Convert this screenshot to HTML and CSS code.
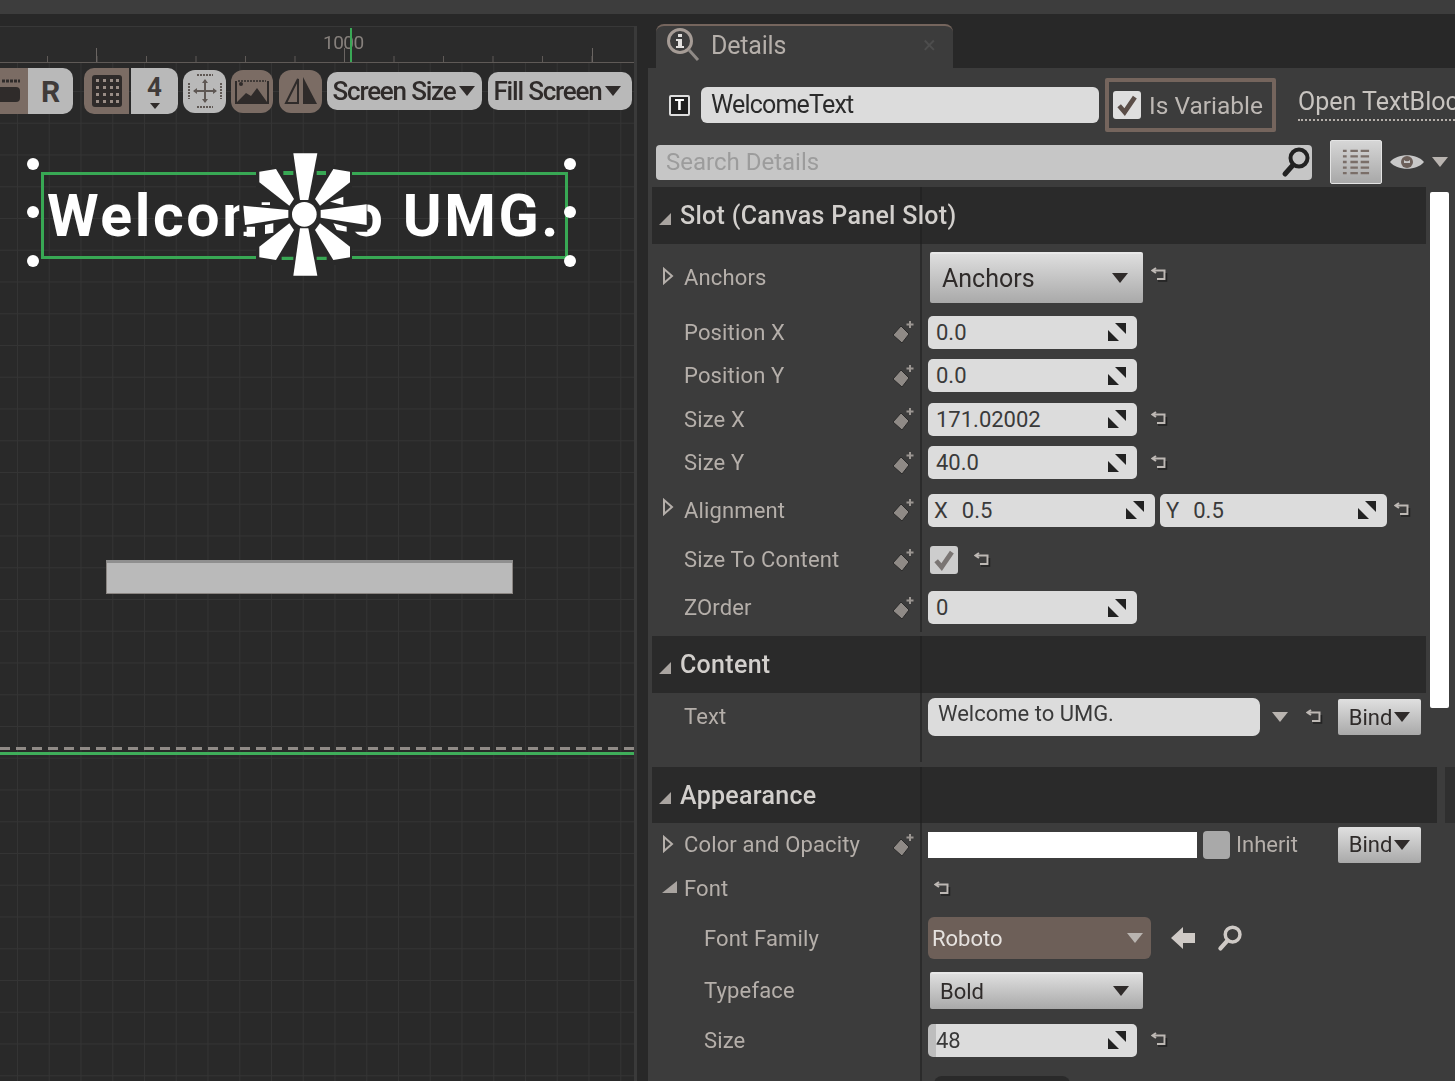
FILE: index.html
```html
<!DOCTYPE html>
<html>

<head>
  <title>UMG Designer - Details</title>
  <link rel="stylesheet" href="styles.css">
</head>

<body>
  <svg class="sprites" width="0" height="0">
    <symbol id="key" viewBox="0 0 24 24">
      <path d="M10 6l8 8-7 9-9-8z" fill="#8f8a86" stroke="#2a2a2a" stroke-width="1" />
      <path d="M19 1v7M15.500 4.500h7" stroke="#9b9692" stroke-width="2" />
    </symbol>
    <symbol id="reset" viewBox="0 0 18 18">
      <path d="M5 2L1.500 4.500 5 7" fill="none" stroke="#bdb8b4" stroke-width="2" />
      <path d="M2 4.500h11.500v8.500H6" fill="none" stroke="#bdb8b4" stroke-width="2" />
      <path d="M15.500 7v8H7" fill="none" stroke="#222" stroke-width="1.500" />
    </symbol>
    <symbol id="spin" viewBox="0 0 18 18">
      <path d="M7 0h11v11z" fill="#222" />
      <path d="M0 7l11 11H0z" fill="#222" />
    </symbol>
    <symbol id="lens" viewBox="0 0 30 32">
      <circle cx="18" cy="12" r="8.500" fill="none" stroke="currentColor" stroke-width="4" />
      <path d="M12 19L4 28" stroke="currentColor" stroke-width="5" stroke-linecap="round" />
    </symbol>
    <symbol id="tick" viewBox="0 0 28 28">
      <path d="M4 15l7 8L24 4" fill="none" stroke="currentColor" stroke-width="6" />
    </symbol>
    <symbol id="closed" viewBox="0 0 12 18">
      <path d="M2 2l8 7-8 7z" fill="none" stroke="#b5afaa" stroke-width="2" />
    </symbol>
  </svg>

  <div class="app">
    <div class="top-strip"></div>

    <div class="workspace">
      <section class="designer">
        <div class="viewport">
          <div class="ruler">
            <span class="ruler-num">1000</span>
            <i class="ruler-mark"></i>
          </div>

          <div class="stage">
            <div class="toolbar">
              <div class="tb-group">
                <div class="tb-btn tb-brown tb-clip">
                  <svg width="22" height="30" viewBox="0 0 22 30">
                    <path d="M2 5h18" stroke="#2f2b2a" stroke-width="3" stroke-dasharray="3 1" />
                    <rect x="-4" y="11" width="24" height="15" rx="4" fill="#2f2b2a" />
                  </svg>
                </div>
                <div class="tb-btn tb-light tb-end">R</div>
              </div>

              <div class="tb-group tb-gap">
                <div class="tb-btn tb-brown tb-start">
                  <svg width="30" height="32" viewBox="0 0 30 32">
                    <rect width="30" height="32" rx="3" fill="#2f2b2a" />
                    <path d="M4 4h3v3H4zm7 0h3v3h-3zm7 0h3v3h-3zm6 0h3v3h-3zM4 11h3v3H4zm7 0h3v3h-3zm7 0h3v3h-3zm6 0h3v3h-3zM4 18h3v3H4zm7 0h3v3h-3zm7 0h3v3h-3zm6 0h3v3h-3zM4 25h3v3H4zm7 0h3v3h-3zm7 0h3v3h-3zm6 0h3v3h-3z" fill="#9a8d86" />
                  </svg>
                </div>
                <div class="tb-btn tb-light tb-end tb-num">4<i class="caret caret-small"></i></div>
              </div>

              <div class="tb-btn tb-light tb-round tb-fit">
                <svg width="36" height="36" viewBox="0 0 36 36">
                  <path d="M10 2h16M10 34h16M2 10v16M34 10v16" stroke="#5f5854" stroke-width="2" stroke-dasharray="2 1" />
                  <path d="M18 7v22M7 18h22" stroke="#5f5854" stroke-width="2" />
                  <path d="M18 6l-3 4h6zM18 30l-3-4h6zM6 18l4-3v6zM30 18l-4-3v6z" fill="#5f5854" />
                </svg>
              </div>
              <div class="tb-btn tb-brown tb-round tb-pic">
                <svg width="34" height="26" viewBox="0 0 34 26">
                  <path d="M1 3v22h32V3" fill="none" stroke="#2f2b2a" stroke-width="2" />
                  <path d="M3 3h28" stroke="#2f2b2a" stroke-width="1.500" stroke-dasharray="2 1" />
                  <circle cx="6" cy="6" r="2" fill="#2f2b2a" />
                  <path d="M2 24l9-9 5 3 6-8 10 14z" fill="#2f2b2a" />
                </svg>
              </div>
              <div class="tb-btn tb-brown tb-round tb-mirror">
                <svg width="34" height="30" viewBox="0 0 34 30">
                  <path d="M14 3L2 27h12z" fill="none" stroke="#2f2b2a" stroke-width="2" />
                  <path d="M19 1l14 27H19z" fill="#2f2b2a" />
                </svg>
              </div>
              <div class="tb-btn tb-light tb-text tb-screen">Screen Size<i class="caret"></i></div>
              <div class="tb-btn tb-light tb-text tb-fill">Fill Screen<i class="caret"></i></div>
            </div>

            <!-- widgets sit on the free design canvas -->
            <div class="widget-text">Welcome to UMG.</div>
            <i class="handle h-tl"></i><i class="handle h-tr"></i>
            <i class="handle h-ml"></i><i class="handle h-mr"></i>
            <i class="handle h-bl"></i><i class="handle h-br"></i>

            <svg class="spinner" width="150" height="140" viewBox="0 0 450 420">
              <path d="M78 60H366V165H412V260H366V360H78V260H28V165H78z" fill="#292929" />
              <path d="M160 78h30v12h-30zM260 78h28v12h-28zM155 335h35v10h-35zM260 335h30v10h-30z" fill="#38a854" />
              <path d="M50 245h25v30H50zM105 240l25-5v28l-25 4zM310 235l40 10v15l-30-5zM300 170l40-15v25zM95 172h25v8H95z" fill="#fff" />
              <g fill="#fff">
                <circle cx="223" cy="208" r="37" />
                <path d="M190 25h72l-27 140h-25z" />
                <path d="M190 392h72l-27-142h-25z" />
                <path d="M40 182l135 13v23L45 240z" />
                <path d="M410 178v62l-138-22v-23z" />
                <path d="M88 80l50-8 54 90-14 20-90-70z" />
                <path d="M360 80l-50-8-55 90 15 20 90-70z" />
                <path d="M88 337l50 8 54-90-14-20-90 70z" />
                <path d="M360 337l-50 8-55-90 15-20 90 70z" />
              </g>
            </svg>

            <div class="widget-bar"></div>
            <div class="safe-line"></div>
          </div>
        </div>
      </section>

      <section class="details">
        <div class="tab-strip">
          <div class="tab">
            <svg width="34" height="36" viewBox="0 0 34 36">
              <circle cx="14" cy="14" r="11.500" fill="#3c3c3c" stroke="#a69c96" stroke-width="3" />
              <path d="M23 23l9 10" stroke="#8f8a86" stroke-width="3" />
              <path d="M12 7h4v3h-4zM10 12h6v7h2v2h-8v-2h2v-5h-2z" fill="#e2e0de" />
            </svg>
            <span class="tab-title">Details</span>
            <span class="tab-close">×</span>
          </div>
        </div>

        <div class="panel">
          <div class="name-row">
            <div class="type-icon">T</div>
            <div class="name-input">WelcomeText</div>
            <div class="var-box">
              <div class="check check-on"><svg width="22" height="22"><use href="#tick" /></svg></div>
              <span>Is Variable</span>
            </div>
            <div class="open-link">Open TextBlock</div>
          </div>

          <div class="search-row">
            <div class="search-box">
              <span>Search Details</span>
              <svg class="search-lens" width="30" height="32"><use href="#lens" /></svg>
            </div>
            <div class="view-btn">
              <svg width="28" height="30" viewBox="0 0 30 32">
                <path d="M1 4h4M9 4h8M20 4h9M1 10h4M9 10h8M20 10h9M1 16h4M9 16h8M20 16h9M1 22h4M9 22h8M20 22h9M1 28h4M9 28h8M20 28h9" stroke="#7a6e68" stroke-width="2.500" />
              </svg>
            </div>
            <svg class="eye" width="36" height="22" viewBox="0 0 36 22">
              <path d="M1 11C8 2 28 2 35 11 28 20 8 20 1 11z" fill="#c8c8c8" />
              <circle cx="18" cy="11" r="6" fill="#6c5f59" />
              <path d="M15 9a4 4 0 0 0 6 0v3h-6z" fill="#c8c8c8" />
            </svg>
            <i class="caret caret-pale"></i>
          </div>

          <div class="sections">
            <div class="section-head">
              <div class="head-label"><i class="tri-open"></i>Slot (Canvas Panel Slot)</div>
            </div>

            <div class="row row-anchors">
              <div class="label"><svg class="tri-closed"><use href="#closed" /></svg><span>Anchors</span></div>
              <div class="value">
                <div class="combo combo-anchors">Anchors<i class="caret"></i></div>
                <svg class="reset reset-anchors"><use href="#reset" /></svg>
              </div>
            </div>
            <div class="row row-44">
              <div class="label"><span class="ind">Position X</span><svg class="key"><use href="#key" /></svg></div>
              <div class="value">
                <div class="field">0.0<svg class="spin"><use href="#spin" /></svg></div>
              </div>
            </div>
            <div class="row row-43">
              <div class="label"><span class="ind">Position Y</span><svg class="key"><use href="#key" /></svg></div>
              <div class="value">
                <div class="field">0.0<svg class="spin"><use href="#spin" /></svg></div>
              </div>
            </div>
            <div class="row row-44">
              <div class="label"><span class="ind">Size X</span><svg class="key"><use href="#key" /></svg></div>
              <div class="value">
                <div class="field">171.02002<svg class="spin"><use href="#spin" /></svg></div>
                <svg class="reset"><use href="#reset" /></svg>
              </div>
            </div>
            <div class="row row-43">
              <div class="label"><span class="ind">Size Y</span><svg class="key"><use href="#key" /></svg></div>
              <div class="value">
                <div class="field">40.0<svg class="spin"><use href="#spin" /></svg></div>
                <svg class="reset"><use href="#reset" /></svg>
              </div>
            </div>
            <div class="row row-align">
              <div class="label"><svg class="tri-closed tri-high"><use href="#closed" /></svg><span>Alignment</span><svg class="key"><use href="#key" /></svg></div>
              <div class="value value-pair">
                <div class="field field-wide"><b>X</b>0.5<svg class="spin"><use href="#spin" /></svg></div>
                <div class="field field-wide"><b>Y</b>0.5<svg class="spin"><use href="#spin" /></svg></div>
                <svg class="reset reset-pair"><use href="#reset" /></svg>
              </div>
            </div>
            <div class="row row-content">
              <div class="label"><span class="ind">Size To Content</span><svg class="key"><use href="#key" /></svg></div>
              <div class="value">
                <div class="check check-grey"><svg width="22" height="22"><use href="#tick" /></svg></div>
                <svg class="reset reset-check"><use href="#reset" /></svg>
              </div>
            </div>
            <div class="row row-zorder">
              <div class="label"><span class="ind">ZOrder</span><svg class="key"><use href="#key" /></svg></div>
              <div class="value">
                <div class="field">0<svg class="spin"><use href="#spin" /></svg></div>
              </div>
            </div>

            <div class="section-head section-content">
              <div class="head-label"><i class="tri-open"></i>Content</div>
            </div>

            <div class="row row-text">
              <div class="label"><span class="ind">Text</span></div>
              <div class="value">
                <div class="field-multi">Welcome to UMG.</div>
                <i class="caret caret-pale caret-text"></i>
                <svg class="reset reset-text"><use href="#reset" /></svg>
                <div class="bind bind-text">Bind<i class="caret"></i></div>
              </div>
            </div>

            <div class="section-head section-wide">
              <div class="head-label"><i class="tri-open"></i>Appearance</div>
            </div>

            <div class="row row-color">
              <div class="label"><svg class="tri-closed"><use href="#closed" /></svg><span>Color and Opacity</span><svg class="key"><use href="#key" /></svg></div>
              <div class="value">
                <div class="swatch"></div>
                <div class="swatch-check"></div>
                <span class="inherit">Inherit</span>
                <div class="bind bind-color">Bind<i class="caret"></i></div>
              </div>
            </div>
            <div class="row row-font">
              <div class="label"><i class="tri-down"></i><span>Font</span></div>
              <div class="value">
                <svg class="reset reset-font"><use href="#reset" /></svg>
              </div>
            </div>
            <div class="row row-family">
              <div class="label"><span class="ind2">Font Family</span></div>
              <div class="value">
                <div class="combo-brown">Roboto<i class="caret caret-pale"></i></div>
                <svg class="back" width="28" height="26" viewBox="0 0 28 26">
                  <path d="M2 13L14 2v6h12v10H14v6z" fill="#cfcac6" />
                </svg>
                <svg class="find" width="26" height="28"><use href="#lens" /></svg>
              </div>
            </div>
            <div class="row row-typeface">
              <div class="label"><span class="ind2">Typeface</span></div>
              <div class="value">
                <div class="combo combo-typeface">Bold<i class="caret"></i></div>
              </div>
            </div>
            <div class="row row-size">
              <div class="label"><span class="ind2">Size</span></div>
              <div class="value">
                <div class="field field-slider">48<svg class="spin"><use href="#spin" /></svg></div>
                <svg class="reset"><use href="#reset" /></svg>
              </div>
            </div>
            <div class="row row-next">
              <div class="label"></div>
              <div class="value">
                <div class="next-combo"></div>
              </div>
            </div>
          </div>

          <div class="scroll-thumb"></div>
        </div>
      </section>
    </div>
  </div>
</body>

</html>
```

FILE: styles.css
```css
html,
body {
  margin: 0;
  height: 100%;
  overflow: hidden;
  background: #282828;
}

.sprites {
  position: absolute;
}

.app {
  width: 1455px;
  height: 1081px;
  display: flex;
  flex-direction: column;
  font-family: Roboto, "Liberation Sans", sans-serif;
  font-size: 22px;
  color: #b5afaa;
  filter: blur(0.5px);
}

.top-strip {
  height: 14px;
  background: #3d3d3d;
}

.workspace {
  flex: 1;
  display: flex;
  min-height: 0;
}

/* left: designer viewport */
.designer {
  width: 648px;
  padding-top: 12px;
  box-sizing: border-box;
}

.viewport {
  width: 634px;
  height: 100%;
  display: flex;
  flex-direction: column;
  border-right: 3px solid #3a3a3a;
  background-color: #292929;
}

.ruler {
  position: relative;
  height: 37px;
  box-sizing: border-box;
  border-bottom: 1px solid #5f5a57;
  border-top: 1px solid #383838;
  background:
    linear-gradient(90deg, #6a6562 1px, transparent 1px) 96px 100% / 248px 14px repeat-x,
    linear-gradient(90deg, #5f5a57 1px, transparent 1px) 47px 100% / 49.5px 6px repeat-x,
    #2b2b2b;
}

.ruler-num {
  position: absolute;
  left: 323px;
  top: 4px;
  font-size: 19px;
  letter-spacing: -0.5px;
  color: #86807c;
}

.ruler-mark {
  position: absolute;
  left: 350px;
  top: 1px;
  bottom: 0;
  width: 2px;
  background: #3aa856;
}

.stage {
  position: relative;
  flex: 1;
  background-color: #292929;
  background-image:
    linear-gradient(90deg, #343434 1px, transparent 1px),
    linear-gradient(#343434 1px, transparent 1px);
  background-size: 31.75px 31.75px;
  background-position: 17px 28px;
}

.toolbar {
  display: flex;
  align-items: center;
  height: 46px;
  padding-top: 5px;
}

.tb-group {
  display: flex;
  height: 46px;
  gap: 2px;
}

.tb-group:first-child {
  gap: 0;
}

.tb-gap {
  margin: 0 5px 0 11px;
}

.tb-btn {
  display: flex;
  align-items: center;
  justify-content: center;
  box-sizing: border-box;
  color: #2f2b2a;
  font-weight: 700;
}

.tb-brown {
  background: #7b6c64;
}

.tb-light {
  background: #b9b9b9;
}

.tb-clip {
  width: 28px;
  justify-content: flex-start;
}

.tb-end {
  width: 45px;
  font-size: 30px;
  border-radius: 0 10px 10px 0;
  color: #403b39;
}

.tb-start {
  width: 45px;
  border-radius: 10px 0 0 10px;
}

.tb-num {
  width: 47px;
  flex-direction: column;
  font-size: 26px;
  line-height: 28px;
}

.tb-round {
  height: 43px;
  width: 43px;
  border-radius: 12px;
  margin-right: 5px;
}

.tb-pic {
  width: 42px;
  margin-right: 6px;
}

.tb-mirror {
  margin-right: 5px;
}

.tb-text {
  height: 38px;
  border-radius: 10px;
  font-size: 26px;
  letter-spacing: -1.2px;
  font-weight: 500;
  gap: 3px;
}

.tb-screen {
  width: 155px;
  margin-right: 6px;
  padding-right: 2px;
}

.tb-fill {
  width: 144px;
  padding-right: 6px;
}

.caret {
  display: inline-block;
  flex: none;
  width: 0;
  height: 0;
  border-left: 8px solid transparent;
  border-right: 8px solid transparent;
  border-top: 10px solid #2f2b2a;
}

.caret-small {
  border-width: 6px 5px 0;
  margin-top: 2px;
}

.caret-pale {
  border-top-color: #b9b4b0;
}

/* canvas widgets */
.widget-text {
  position: absolute;
  left: 41px;
  top: 109px;
  width: 527px;
  height: 87px;
  box-sizing: border-box;
  border: 3px solid #38a854;
  display: flex;
  align-items: center;
  padding-left: 3px;
  font-size: 59px;
  font-weight: 700;
  letter-spacing: 2.6px;
  color: #fff;
  white-space: nowrap;
}

.handle {
  position: absolute;
  width: 12px;
  height: 12px;
  border-radius: 50%;
  background: #fff;
}

.h-tl,
.h-tr {
  top: 95px;
}

.h-ml,
.h-mr {
  top: 143px;
}

.h-bl,
.h-br {
  top: 192px;
}

.h-tl,
.h-ml,
.h-bl {
  left: 27px;
}

.h-tr,
.h-mr,
.h-br {
  left: 564px;
}

.spinner {
  position: absolute;
  left: 230px;
  top: 82px;
}

.widget-bar {
  position: absolute;
  left: 106px;
  top: 497px;
  width: 407px;
  height: 34px;
  box-sizing: border-box;
  border: 1px solid #8a8582;
  border-top: 3px solid #8f8f8f;
  background: #bababa;
}

.safe-line {
  position: absolute;
  left: 0;
  right: 0;
  top: 684px;
  height: 8px;
  background:
    linear-gradient(#3fae5a, #3fae5a) 0 100% / 100% 3px no-repeat,
    repeating-linear-gradient(90deg, #8f8a86 0 10px, transparent 10px 16px) 0 0 / 100% 3px no-repeat;
}

/* right: details panel */
.details {
  flex: 1;
  display: flex;
  flex-direction: column;
  min-width: 0;
}

.tab-strip {
  height: 54px;
  padding: 10px 0 0 8px;
  box-sizing: border-box;
}

.tab {
  width: 297px;
  height: 44px;
  box-sizing: border-box;
  border-top: 2px solid #75655d;
  border-radius: 8px 8px 0 0;
  background: #3c3c3c;
  display: flex;
  align-items: center;
  padding: 0 0 4px 10px;
  gap: 11px;
  color: #b5afaa;
}

.tab-title {
  font-size: 25px;
  letter-spacing: -0.2px;
  width: 201px;
}

.tab-close {
  color: #4d4d4d;
  font-size: 24px;
}

.panel {
  position: relative;
  flex: 1;
  background: #3c3c3c;
  overflow: hidden;
  min-height: 0;
}

.name-row {
  height: 64px;
  display: flex;
  align-items: center;
  padding-left: 21px;
  box-sizing: border-box;
  padding-top: 10px;
  white-space: nowrap;
}

.type-icon {
  flex: none;
  width: 21px;
  height: 21px;
  box-sizing: border-box;
  background: #1f1f1f;
  border: 2px solid #ddd;
  border-radius: 2px;
  color: #fff;
  font-size: 15px;
  font-weight: 900;
  line-height: 17px;
  text-align: center;
}

.name-input {
  flex: none;
  width: 398px;
  height: 36px;
  margin: 0 6px 0 11px;
  box-sizing: border-box;
  border-radius: 6px;
  background: #dcdcdc;
  color: #2b2b2b;
  font-size: 25px;
  line-height: 36px;
  padding-left: 10px;
  letter-spacing: -0.8px;
}

.var-box {
  flex: none;
  width: 171px;
  height: 54px;
  box-sizing: border-box;
  border: 4px solid #75655d;
  border-radius: 2px;
  display: flex;
  align-items: center;
  padding-left: 4px;
  gap: 8px;
  font-size: 24.500px;
  color: #bdb8b4;
}

.check {
  flex: none;
  width: 28px;
  height: 28px;
  box-sizing: border-box;
  border-radius: 3px;
  background: #dedede;
  display: flex;
  align-items: center;
  justify-content: center;
}

.check-on {
  color: #5a4d47;
}

.check-grey {
  margin-left: 2px;
  background: #cdcdcd;
  color: #7a7573;
}

.open-link {
  margin-left: 22px;
  margin-top: -3px;
  font-size: 25px;
  color: #c8c4c0;
  padding-bottom: 3px;
  border-bottom: 2px dotted #b5afaa;
}

.search-row {
  height: 55px;
  display: flex;
  align-items: center;
  padding-left: 8px;
  box-sizing: border-box;
  padding-top: 5px;
}

.search-box {
  flex: none;
  width: 656px;
  height: 35px;
  box-sizing: border-box;
  border-radius: 4px;
  background: #c6c6c6;
  display: flex;
  align-items: center;
  justify-content: space-between;
  padding: 0 0 0 10px;
  font-size: 24px;
  color: #9c9c9c;
}

.search-lens {
  color: #222;
  margin-right: 1px;
}

.view-btn {
  flex: none;
  width: 52px;
  height: 44px;
  margin-left: 18px;
  box-sizing: border-box;
  border-radius: 2px;
  background: linear-gradient(#d6d6d6, #a8a8a8);
  border: 1px solid #e4e4e4;
  display: flex;
  align-items: center;
  justify-content: center;
}

.eye {
  margin-left: 7px;
}

.search-row .caret-pale {
  margin-left: 7px;
}

.sections {
  width: 778px;
  padding-left: 4px;
  box-sizing: border-box;
}

.section-head {
  height: 57px;
  background: linear-gradient(90deg, #2a2a2a 268px, #232323 268px 270px, #2a2a2a 270px);
  display: flex;
  align-items: center;
}

.section-content {
  height: 57px;
}

.section-wide {
  width: 803px;
  height: 56px;
  margin-top: 5px;
  background: linear-gradient(90deg, #2a2a2a 268px, #232323 268px 270px, #2a2a2a 270px 785px, transparent 785px 793px, #2f2f2f 793px);
}

.head-label {
  display: flex;
  align-items: center;
  font-size: 25px;
  font-weight: 500;
  letter-spacing: 0.3px;
  color: #d2cfcc;
}

.tri-open {
  display: block;
  width: 0;
  height: 0;
  margin: 6px 9px 0 7px;
  border-left: 12px solid transparent;
  border-bottom: 12px solid #a9a4a0;
}

.tri-closed {
  display: block;
  flex: none;
  width: 12px;
  height: 18px;
  margin: -2px 10px 0 10px;
}

.tri-high {
  margin-top: -6px;
}

.tri-down {
  display: block;
  flex: none;
  width: 0;
  height: 0;
  margin: -3px 7px 0 10px;
  border-left: 15px solid transparent;
  border-bottom: 12px solid #a9a4a0;
}

.row {
  display: flex;
  align-items: stretch;
}

.row-anchors {
  height: 66px;
}

.row-44 {
  height: 44px;
}

.row-43 {
  height: 43px;
}

.row-align {
  height: 52px;
}

.row-content {
  height: 47px;
}

.row-zorder {
  height: 49px;
  margin-bottom: 4px;
}

.row-text {
  height: 69px;
}

.row-text .label {
  padding-bottom: 22px;
}

.row-color {
  height: 43px;
}

.row-font {
  height: 45px;
}

.row-family {
  height: 54px;
}

.row-typeface {
  height: 50px;
}

.row-size {
  height: 50px;
}

.row-next {
  height: 40px;
}

.label {
  width: 270px;
  flex: none;
  box-sizing: border-box;
  border-right: 2px solid #2b2b2b;
  display: flex;
  align-items: center;
  white-space: nowrap;
  letter-spacing: 0.15px;
}

.ind {
  margin-left: 32px;
}

.ind2 {
  margin-left: 52px;
}

.key {
  flex: none;
  width: 24px;
  height: 24px;
  margin: 0 5px 0 auto;
}

.value {
  flex: 1;
  display: flex;
  align-items: center;
  padding-left: 6px;
  min-width: 0;
  white-space: nowrap;
}

.field {
  width: 209px;
  height: 33px;
  flex: none;
  box-sizing: border-box;
  border-radius: 5px;
  background: #dcdcdc;
  color: #3a3a3a;
  display: flex;
  align-items: center;
  padding: 0 11px 0 8px;
  justify-content: space-between;
}

.spin {
  width: 18px;
  height: 18px;
  flex: none;
}

.reset {
  width: 18px;
  height: 18px;
  flex: none;
  margin-left: 14px;
}

.reset-anchors {
  margin: -4px 0 0 8px;
}

.combo {
  flex: none;
  height: 51px;
  width: 213px;
  margin-left: 2px;
  box-sizing: border-box;
  border-radius: 2px;
  background: linear-gradient(#dedede, #a9a9a9);
  border-top: 2px solid #e8e8e8;
  display: flex;
  align-items: center;
  justify-content: space-between;
  padding: 0 15px 0 12px;
  font-size: 25px;
  color: #2f2b2a;
}

.combo-typeface {
  height: 37px;
  padding: 0 14px 0 10px;
  font-size: 22px;
}

.value-pair {
  gap: 5px;
}

.field-wide {
  width: 227px;
  justify-content: flex-start;
  padding-right: 11px;
  padding-left: 6px;
}

.field-wide b {
  font-weight: 400;
  margin-right: 14px;
}

.field-wide .spin {
  margin-left: auto;
}

.reset-pair {
  margin-left: 2px;
}

.reset-check {
  margin-left: 16px;
}

.field-multi {
  flex: none;
  width: 332px;
  height: 38px;
  margin-top: -21px;
  box-sizing: border-box;
  border-radius: 7px;
  background: #dcdcdc;
  color: #3a3a3a;
  padding: 3px 0 0 10px;
  font-size: 22px;
}

.caret-text {
  margin: -21px 0 0 12px;
}

.reset-text {
  margin: -21px 0 0 18px;
}

.bind {
  flex: none;
  width: 83px;
  height: 36px;
  box-sizing: border-box;
  border-radius: 2px;
  background: linear-gradient(#e0e0e0, #a9a9a9);
  color: #2f2b2a;
  display: flex;
  align-items: center;
  justify-content: center;
  gap: 2px;
}

.bind-text {
  margin: -21px 0 0 14px;
}

.bind-color {
  margin-left: auto;
}

.swatch {
  flex: none;
  width: 269px;
  height: 26px;
  background: #fff;
}

.swatch-check {
  flex: none;
  width: 27px;
  height: 28px;
  margin-left: 6px;
  border-radius: 4px;
  background: #a9a9a9;
}

.inherit {
  margin-left: 6px;
}

.row-color .value {
  padding-right: 5px;
}

.reset-font {
  margin-left: 6px;
}

.combo-brown {
  flex: none;
  width: 223px;
  height: 42px;
  box-sizing: border-box;
  border-radius: 6px;
  background: #6d5f58;
  color: #e6e2df;
  display: flex;
  align-items: center;
  justify-content: space-between;
  padding: 0 8px 0 4px;
}

.back {
  margin-left: 18px;
}

.find {
  margin-left: 20px;
  color: #cfcac6;
}

.field-slider {
  background: linear-gradient(90deg, #bdbdbd 8px, #dcdcdc 8px);
}

.next-combo {
  flex: none;
  width: 136px;
  height: 30px;
  margin-left: 6px;
  align-self: flex-start;
  margin-top: 11px;
  border-radius: 8px 8px 0 0;
  background: #2a2a2a;
}

.scroll-thumb {
  position: absolute;
  left: 782px;
  top: 124px;
  width: 19px;
  height: 516px;
  border-radius: 2px;
  background: #fff;
}
```
